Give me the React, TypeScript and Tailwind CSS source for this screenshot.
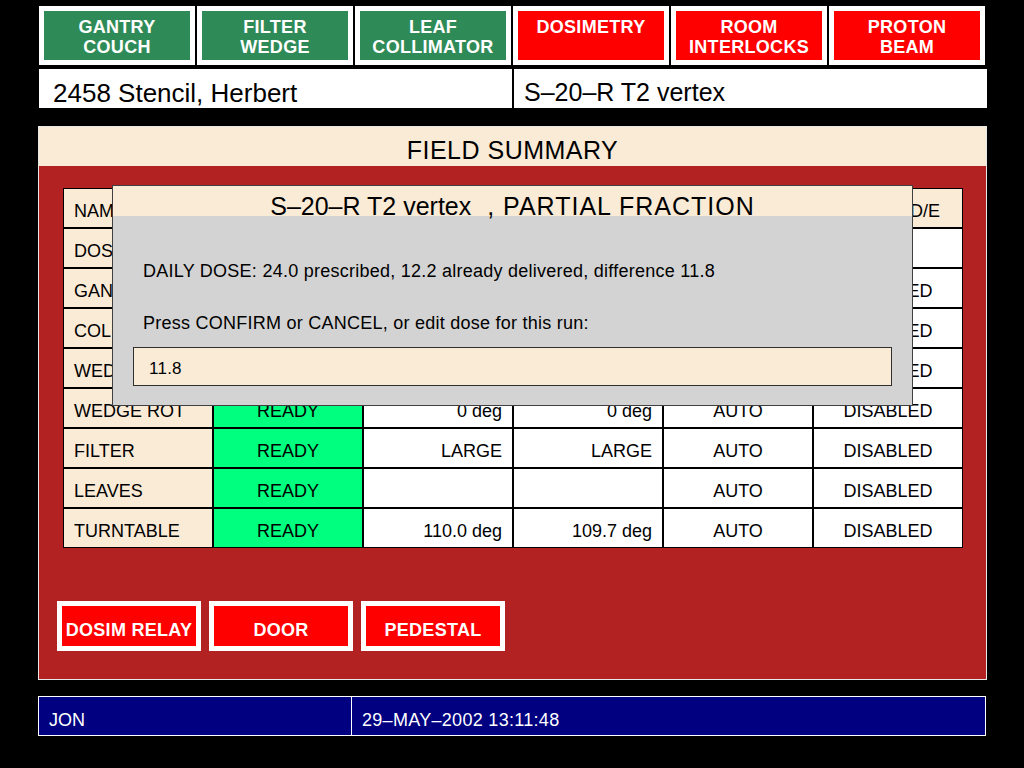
import React from "react";

const font = { fontFamily: '"Liberation Sans", Arial, sans-serif' };

const topButtons = [
    { label: ["GANTRY", "COUCH"], ok: true },
    { label: ["FILTER", "WEDGE"], ok: true },
    { label: ["LEAF", "COLLIMATOR"], ok: true },
    { label: ["DOSIMETRY"], ok: false },
    { label: ["ROOM", "INTERLOCKS"], ok: false },
    { label: ["PROTON", "BEAM"], ok: false },
];

type Row = { name: string; status: string; presc: string; actual: string; mode: string; ovrd: string };

const rows: Row[] = [
    { name: "DOSE", status: "READY", presc: "24.0", actual: "12.2", mode: "", ovrd: "" },
    { name: "GANTRY", status: "READY", presc: "180.0 deg", actual: "180.1 deg", mode: "AUTO", ovrd: "DISABLED" },
    { name: "COLLIMATOR", status: "READY", presc: "45.0 deg", actual: "45.0 deg", mode: "AUTO", ovrd: "DISABLED" },
    { name: "WEDGE", status: "READY", presc: "30", actual: "30", mode: "AUTO", ovrd: "DISABLED" },
    { name: "WEDGE ROT", status: "READY", presc: "0 deg", actual: "0 deg", mode: "AUTO", ovrd: "DISABLED" },
    { name: "FILTER", status: "READY", presc: "LARGE", actual: "LARGE", mode: "AUTO", ovrd: "DISABLED" },
    { name: "LEAVES", status: "READY", presc: "", actual: "", mode: "AUTO", ovrd: "DISABLED" },
    { name: "TURNTABLE", status: "READY", presc: "110.0 deg", actual: "109.7 deg", mode: "AUTO", ovrd: "DISABLED" },
];

const cell = "h-[38px] flex items-center pt-[6px] text-[18px] leading-[20px] text-black whitespace-nowrap overflow-hidden";

export default function App() {
    return (
        <div className="relative w-[1024px] h-[768px] bg-black overflow-hidden" style={font}>

            {/* TOP SUBSYSTEM BUTTONS */}
            <div className="flex gap-[2px] pt-[6px] pl-[39px]">
                {topButtons.map((b) => (
                    <div
                        key={b.label.join(" ")}
                        className={`w-[156px] h-[59px] border-[5px] border-white flex flex-col items-center pt-[6px] text-white font-bold text-[18px] leading-[20px] tracking-[0.3px] ${b.ok ? "bg-[#2e8b57]" : "bg-[#ff0000]"}`}
                    >
                        {b.label.map((l) => <span key={l}>{l}</span>)}
                    </div>
                ))}
            </div>

            {/* PATIENT / FIELD */}
            <div className="flex gap-[2px] mt-[4px] ml-[39px]">
                <div className="w-[473px] h-[39px] bg-white pl-[14px] pt-[11px] text-[26px] leading-[26px] text-black overflow-hidden">2458 Stencil, Herbert</div>
                <div className="w-[473px] h-[39px] bg-white pl-[10px] pt-[11px] text-[25px] leading-[25px] text-black overflow-hidden">S–20–R T2 vertex</div>
            </div>

            {/* FIELD SUMMARY PANEL */}
            <div className="mt-[18px] ml-[38px] w-[949px] border border-[#e8e8e8] bg-[#b22222]">
                <div className="h-[39px] bg-[#faebd7] text-center pt-[11px] text-[25px] leading-[25px] tracking-[0.5px] text-black">FIELD SUMMARY</div>

                <div className="ml-[24px] mt-[22px] w-[900px] grid grid-cols-6 gap-[2px] p-[1px] bg-black">
                    <div className={`${cell} bg-[#faebd7] pl-[10px]`}>NAME</div>
                    <div className={`${cell} bg-[#faebd7] justify-center`}>STATUS</div>
                    <div className={`${cell} bg-[#faebd7] justify-center`}>PRESCRIBED</div>
                    <div className={`${cell} bg-[#faebd7] justify-center`}>ACTUAL</div>
                    <div className={`${cell} bg-[#faebd7] justify-center`}>MODE</div>
                    <div className={`${cell} bg-[#faebd7] justify-center`}>OVRIDE D/E</div>

                    {rows.map((r) => (
                        <React.Fragment key={r.name}>
                            <div className={`${cell} bg-[#faebd7] pl-[10px]`}>{r.name}</div>
                            <div className={`${cell} bg-[#00ff7f] justify-center`}>{r.status}</div>
                            <div className={`${cell} bg-white justify-end pr-[10px]`}>{r.presc}</div>
                            <div className={`${cell} bg-white justify-end pr-[10px]`}>{r.actual}</div>
                            <div className={`${cell} bg-white justify-center`}>{r.mode}</div>
                            <div className={`${cell} bg-white justify-center`}>{r.ovrd}</div>
                        </React.Fragment>
                    ))}
                </div>

                {/* INTERLOCK BUTTONS */}
                <div className="flex gap-[8px] mt-[53px] ml-[18px] mb-[28px]">
                    {["DOSIM RELAY", "DOOR", "PEDESTAL"].map((l) => (
                        <div
                            key={l}
                            className="w-[144px] h-[50px] border-[5px] border-white bg-[#ff0000] flex items-center justify-center pt-[7px] text-white font-bold text-[18px] leading-[20px] tracking-[0.3px] whitespace-nowrap"
                        >
                            {l}
                        </div>
                    ))}
                </div>
            </div>

            {/* STATUS LINE */}
            <div className="mt-[16px] ml-[38px] w-[948px] h-[40px] border border-white bg-[#000080] flex text-white text-[18px] leading-[20px]">
                <div className="w-[313px] border-r border-white flex items-center pl-[10px] pt-[8px]">JON</div>
                <div className="flex-1 flex items-center pl-[10px] pt-[8px] tracking-[0.3px]">29–MAY–2002 13:11:48</div>
            </div>

            {/* PARTIAL FRACTION DIALOG */}
            <div className="absolute left-[112px] top-[185px] w-[801px] h-[221px] border border-[#404040] bg-[#d3d3d3] flex flex-col">
                <div className="h-[30px] bg-[#faebd7] text-center pt-[8px] text-[25px] leading-[25px] text-black whitespace-pre">
                    <span>S–20–R T2 vertex</span>
                    <span className="tracking-[1px]">  , PARTIAL FRACTION</span>
                </div>
                <div className="px-[20px] pt-[45px] text-[18px] leading-[20px] tracking-[0.25px] text-black">
                    <p className="pl-[10px]">DAILY DOSE: 24.0 prescribed, 12.2 already delivered, difference 11.8</p>
                    <p className="pl-[10px] mt-[32px]">Press CONFIRM or CANCEL, or edit dose for this run:</p>
                    <div className="mt-[14px] h-[39px] border border-[#303030] bg-[#faebd7] flex items-center pl-[15px] pt-[4px] text-[17px]">11.8</div>
                </div>
            </div>
        </div>
    );
}
